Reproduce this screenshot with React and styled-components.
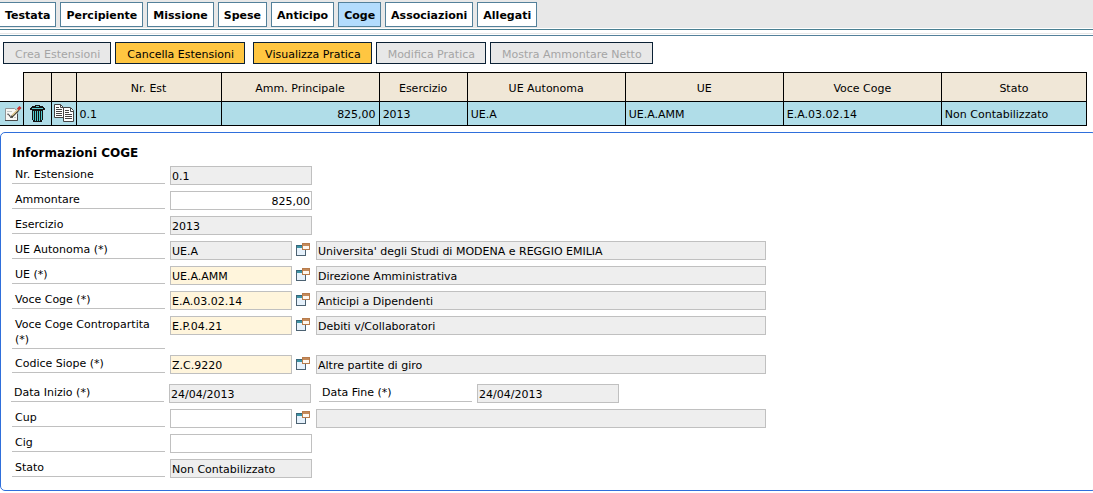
import React, { useState } from 'react'
import styled, { createGlobalStyle } from 'styled-components'

const tabs = ['Testata', 'Percipiente', 'Missione', 'Spese', 'Anticipo', 'Coge', 'Associazioni', 'Allegati']

const columns = [
  { title: 'Nr. Est', width: 145, value: '0.1' },
  { title: 'Amm. Principale', width: 158, value: '825,00', align: 'right' },
  { title: 'Esercizio', width: 88, value: '2013' },
  { title: 'UE Autonoma', width: 158, value: 'UE.A' },
  { title: 'UE', width: 158, value: 'UE.A.AMM' },
  { title: 'Voce Coge', width: 158, value: 'E.A.03.02.14' },
  { title: 'Stato', width: 145, value: 'Non Contabilizzato' },
]

function EditIcon() {
  return (
    <svg width="17" height="17" viewBox="0 0 17 17">
      <path d="M.5 3.5H9.5L12.5 6V15.5H.5Z" fill="#f8f8f4" stroke="#8f9698" />
      <path d="M0 15.5H12.5V9" fill="none" stroke="#4a4a4a" />
      <path d="M2 6.5H7M2 8.5H4M9 12.5H11" stroke="#c4c8c8" />
      <path d="M2.5 9.5L4.5 10L5.5 12.5L8 12" fill="none" stroke="#333" />
      <path d="M6.5 12L13.5 5" stroke="#3c3c30" strokeWidth="2.2" />
      <path d="M7 10.5L13 4.5" stroke="#e6cf96" strokeWidth="1.4" />
      <path d="M13 4.5L15.5 2" stroke="#c8322e" strokeWidth="3" />
    </svg>
  )
}

function TrashIcon() {
  return (
    <svg width="15" height="17" viewBox="0 0 15 17" shapeRendering="crispEdges">
      <path d="M5 0H10V1H13V2H14V3H15V5H0V3H1V2H2V1H5Z" fill="#111" />
      <path d="M6 1H9V2H6ZM2 3H13V4H2Z" fill="#5cc8cc" />
      <path d="M2 5H13V15H12V17H3V15H2Z" fill="#111" />
      <path d="M3 6H4V15H3ZM5 6H6V16H5ZM7 6H8V16H7ZM9 6H10V16H9ZM11 6H12V15H11Z" fill="#4cc8cc" />
    </svg>
  )
}

function CopyIcon() {
  return (
    <svg width="20" height="19" viewBox="0 0 20 19">
      <path d="M.5 .5H6.5L9.5 3.5V13.5H.5Z" fill="#fff" stroke="#444" />
      <path d="M6.5 .5V3.5H9.5" fill="none" stroke="#444" />
      <path d="M2 3.5H5M2 5.5H8M2 7.5H8M2 9.5H8M2 11.5H8" stroke="#444" />
      <path d="M9.5 3.5H16.5L19.5 6.5V17.5H9.5Z" fill="#fff" stroke="#444" />
      <path d="M16.5 4V7.5H19.5" fill="none" stroke="#444" />
      <path d="M11 6.5H15M11 8.5H15M11 10.5H18M11 12.5H18M11 14.5H18" stroke="#444" />
    </svg>
  )
}

function LookupIcon() {
  return (
    <svg width="14" height="13" viewBox="0 0 14 13">
      <rect x=".5" y="2.5" width="9" height="10" fill="#e6f1fb" stroke="#4c6272" />
      <path d="M1 3H9V5H1Z" fill="#3b93a4" />
      <path d="M0 2.5H10" stroke="#34677c" />
      <rect x="6.5" y=".5" width="7" height="6" fill="#fff8f0" stroke="#b87c4c" />
      <path d="M7 2H13" stroke="#c48a5a" strokeWidth="2" />
    </svg>
  )
}

function Field({ id, label, value, kind, lookup, description }) {
  const editable = kind !== 'locked'
  return (
    <>
      <Label htmlFor={id}>{label}</Label>
      <TextBox
        id={id}
        defaultValue={value}
        readOnly={!editable}
        $kind={kind}
        $short={lookup}
        $align={id === 'ammontare' ? 'right' : 'left'}
      />
      {lookup && (
        <>
          <LookupButton type="button" aria-label={`Cerca ${label}`}>
            <LookupIcon />
          </LookupButton>
          <Description readOnly aria-label={`Descrizione ${label}`} defaultValue={description} />
        </>
      )}
    </>
  )
}

function App() {
  const [activeTab, setActiveTab] = useState('Coge')

  return (
    <>
      <GlobalStyle />
      <TabBar>
        {tabs.map((tab) => (
          <Tab key={tab} type="button" $active={tab === activeTab} onClick={() => setActiveTab(tab)}>
            {tab}
          </Tab>
        ))}
      </TabBar>
      <Divider />
      <Toolbar>
        <ActionGroup>
          <Action disabled>Crea Estensioni</Action>
          <Action>Cancella Estensioni</Action>
        </ActionGroup>
        <ActionGroup>
          <Action>Visualizza Pratica</Action>
          <Action disabled>Modifica Pratica</Action>
          <Action disabled>Mostra Ammontare Netto</Action>
        </ActionGroup>
      </Toolbar>
      <Grid>
        <colgroup>
          <Col $width={23} />
          <Col $width={28} />
          <Col $width={25} />
          {columns.map((col) => (
            <Col key={col.title} $width={col.width} />
          ))}
        </colgroup>
        <thead>
          <tr>
            <Corner />
            <Th />
            <Th />
            {columns.map((col) => (
              <Th key={col.title}>{col.title}</Th>
            ))}
          </tr>
        </thead>
        <tbody>
          <tr>
            <IconCell $first>
              <IconButton type="button" aria-label="Modifica">
                <EditIcon />
              </IconButton>
            </IconCell>
            <IconCell>
              <IconButton type="button" aria-label="Elimina">
                <TrashIcon />
              </IconButton>
            </IconCell>
            <IconCell>
              <IconButton type="button" aria-label="Copia">
                <CopyIcon />
              </IconButton>
            </IconCell>
            {columns.map((col) => (
              <Td key={col.title} $align={col.align}>
                {col.value}
              </Td>
            ))}
          </tr>
        </tbody>
      </Grid>
      <Panel>
        <Title>Informazioni COGE</Title>
        <Row>
          <Field id="nr" label="Nr. Estensione" value="0.1" kind="locked" />
        </Row>
        <Row>
          <Field id="ammontare" label="Ammontare" value="825,00" />
        </Row>
        <Row>
          <Field id="esercizio" label="Esercizio" value="2013" kind="locked" />
        </Row>
        <Row>
          <Field
            id="ue-autonoma"
            label="UE Autonoma (*)"
            value="UE.A"
            kind="locked"
            lookup
            description="Universita' degli Studi di MODENA e REGGIO EMILIA"
          />
        </Row>
        <Row>
          <Field id="ue" label="UE (*)" value="UE.A.AMM" kind="required" lookup description="Direzione Amministrativa" />
        </Row>
        <Row>
          <Field id="voce" label="Voce Coge (*)" value="E.A.03.02.14" kind="required" lookup description="Anticipi a Dipendenti" />
        </Row>
        <Row>
          <Field
            id="contropartita"
            label="Voce Coge Contropartita (*)"
            value="E.P.04.21"
            kind="required"
            lookup
            description="Debiti v/Collaboratori"
          />
        </Row>
        <Row>
          <Field id="siope" label="Codice Siope (*)" value="Z.C.9220" kind="required" lookup description="Altre partite di giro" />
        </Row>
        <DateRow>
          <DateField>
            <Field id="inizio" label="Data Inizio (*)" value="24/04/2013" kind="locked" />
          </DateField>
          <DateField>
            <Field id="fine" label="Data Fine (*)" value="24/04/2013" kind="locked" />
          </DateField>
        </DateRow>
        <Row>
          <Field id="cup" label="Cup" value="" lookup description="" />
        </Row>
        <Row>
          <Field id="cig" label="Cig" value="" />
        </Row>
        <Row>
          <Field id="stato" label="Stato" value="Non Contabilizzato" kind="locked" />
        </Row>
      </Panel>
    </>
  )
}

const GlobalStyle = createGlobalStyle`
  * {
    box-sizing: border-box;
  }
  body {
    margin: 0;
    background: #fff;
    color: #000;
    overflow-x: hidden;
  }
  body, button, input, table {
    font-family: Verdana, 'DejaVu Sans', sans-serif;
    font-size: 11px;
  }
`

const TabBar = styled.nav`
  display: flex;
  gap: 4px;
  padding: 2px 0 1px;
  background: #e8e8e8;
`

const Tab = styled.button`
  height: 25px;
  padding: 2px 5px 0;
  border: 1px solid #53809a;
  background: ${(props) => (props.$active ? '#b3dcfd' : '#fff')};
  color: #000;
  font-weight: bold;
  cursor: pointer;
  &:first-child {
    border-left: none;
  }
`

const Divider = styled.div`
  height: 7px;
  margin-top: 1px;
  border-top: 1px solid #4a8092;
  border-bottom: 1px solid #53809a;
  background: linear-gradient(#fff 3px, #e8e8e8 3px, #e8e8e8 4px, #fff 4px);
`

const Toolbar = styled.div`
  display: flex;
  gap: 8px;
  padding: 6px 3px 8px;
`

const ActionGroup = styled.div`
  display: flex;
  gap: 4px;
`

const Action = styled.button`
  height: 22px;
  padding: 3px 10px 0 11px;
  border: 1px solid #0b2135;
  background: #ffc641;
  color: #000;
  cursor: pointer;
  &:disabled {
    background: #e8e8e8;
    color: #a5a5a5;
    cursor: default;
  }
`

const Grid = styled.table`
  width: calc(100% - 6px);
  table-layout: fixed;
  border-collapse: collapse;
`

const Col = styled.col`
  width: ${(props) => props.$width}px;
`

const Corner = styled.td`
  padding: 0;
`

const Th = styled.th`
  height: 29px;
  padding: 2px 3px 0;
  border: 1px solid #000;
  background: #f0e7d7;
  font-weight: normal;
`

const Td = styled.td`
  height: 24px;
  padding: 2px 3px 0;
  border: 1px solid #000;
  background: #b0dde8;
  text-align: ${(props) => props.$align || 'left'};
`

const IconCell = styled.td`
  height: 24px;
  padding: ${(props) => (props.$first ? '0 0 0 4px' : '0')};
  border: 1px solid #000;
  border-left: ${(props) => (props.$first ? 'none' : '1px solid #000')};
  background: #b0dde8;
`

const IconButton = styled.button`
  display: flex;
  justify-content: center;
  width: 100%;
  padding: 0;
  border: none;
  background: none;
  cursor: pointer;
  svg {
    flex: none;
  }
`

const Panel = styled.section`
  margin: 6px -4px 0 0;
  padding: 12px 11px 6px;
  border: 1px solid #2f6fdb;
  border-radius: 5px;
`

const Title = styled.h2`
  margin: 0 0 5px;
  font-size: 12px;
  line-height: 16px;
`

const Row = styled.div`
  display: flex;
  align-items: flex-start;
  min-height: 25px;
  padding-bottom: 6px;
`

const DateRow = styled.div`
  display: flex;
  gap: 8px;
  margin: 4px 0 0 -1px;
`

const DateField = styled(Row)`
  flex: none;
`

const Label = styled.label`
  flex: none;
  width: 153px;
  margin-right: 5px;
  padding: 1px 3px;
  border-bottom: 1px solid #c0c0c0;
  line-height: 15px;
`

const boxColors = {
  locked: '#eee',
  required: '#fff5dc',
}

const TextBox = styled.input`
  flex: none;
  width: ${(props) => (props.$short ? 122 : 142)}px;
  height: 19px;
  padding: 2px 1px 0;
  border: 1px solid #c0c0c0;
  border-radius: 0;
  background: ${(props) => boxColors[props.$kind] || '#fff'};
  color: #000;
  text-align: ${(props) => props.$align};
  outline: none;
`

const LookupButton = styled.button`
  flex: none;
  display: flex;
  margin: 2px 6px 0 4px;
  padding: 0;
  border: none;
  background: none;
  cursor: pointer;
`

const Description = styled.input`
  width: 450px;
  min-width: 0;
  height: 19px;
  padding: 2px 1px 0;
  border: 1px solid #c0c0c0;
  border-radius: 0;
  background: #eee;
  color: #000;
  outline: none;
`

export default App
